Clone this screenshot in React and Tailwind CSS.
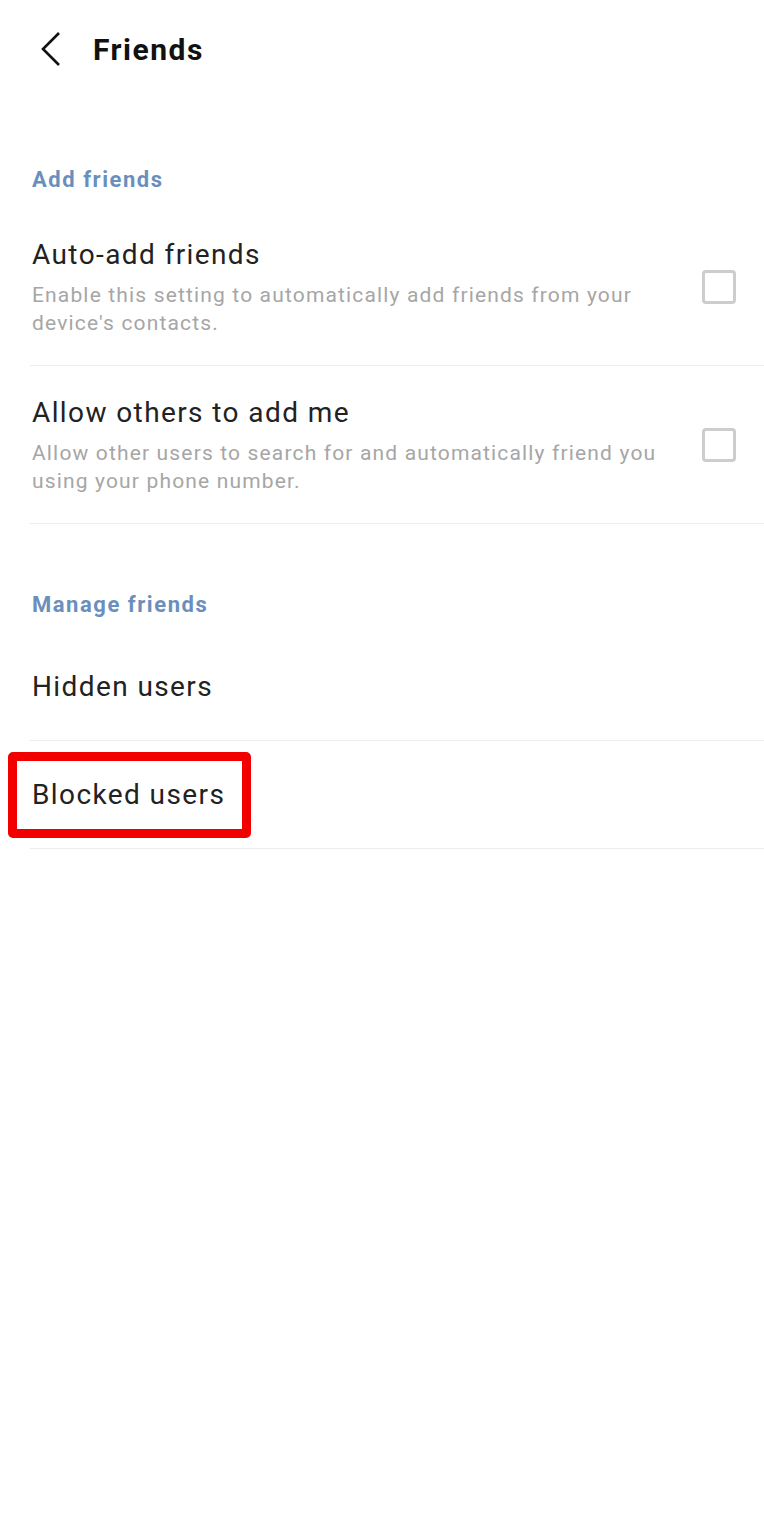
import React from "react";

const font = { fontFamily: "Roboto, 'Noto Sans', sans-serif" };

const Checkbox = () => (
  <div className="w-[34px] h-[34px] shrink-0 rounded-[4px] border-[3px] border-[#cdcdcd] bg-white" />
);

const ToggleRow = ({ title, desc }) => (
  <div className="flex items-center border-b border-[#ececec] pl-[2px] pr-[28px] pt-[29px] pb-[28px]">
    <div className="flex-1 pr-[36px]">
      <div className="text-[28px] leading-[36px] tracking-[0.05em] text-[#222222]">{title}</div>
      <div className="mt-[8px] text-[21px] leading-[28px] tracking-[0.055em] text-[#a6a6a6]">{desc}</div>
    </div>
    <Checkbox />
  </div>
);

const LinkRow = ({ label, highlight }) => (
  <div className="relative flex h-[108px] items-center border-b border-[#ececec] pl-[2px]">
    <span className="text-[28px] leading-[36px] tracking-[0.05em] text-[#222222]">{label}</span>
    {highlight && (
      <div className="absolute left-[-22px] top-[11px] h-[86px] w-[243px] rounded-[5px] border-[9px] border-[#f20000]" />
    )}
  </div>
);

export default function App() {
  return (
    <div className="min-h-[1539px] w-[764px] bg-white" style={font}>
      {/* Header */}
      <div className="flex h-[98px] items-center">
        <div className="flex w-[93px] justify-center">
          <svg width="24" height="36" viewBox="0 0 24 36" className="ml-[8px]">
            <polyline points="20,2 4,18 20,34" fill="none" stroke="#111" strokeWidth="2.6" />
          </svg>
        </div>
        <h1 className="text-[30px] font-bold tracking-[0.05em] text-[#111111]">Friends</h1>
      </div>

      <div className="pl-[30px]">
        <div className="pt-[68px] pb-[14px] pl-[2px] text-[22px] leading-[28px] font-bold tracking-[0.07em] text-[#6b8fbc]">
          Add friends
        </div>
        <ToggleRow
          title="Auto-add friends"
          desc="Enable this setting to automatically add friends from your device's contacts."
        />
        <ToggleRow
          title="Allow others to add me"
          desc="Allow other users to search for and automatically friend you using your phone number."
        />

        <div className="pt-[67px] pb-[14px] pl-[2px] text-[22px] leading-[28px] font-bold tracking-[0.07em] text-[#6b8fbc]">
          Manage friends
        </div>
        <LinkRow label="Hidden users" />
        <LinkRow label="Blocked users" highlight />
      </div>
    </div>
  );
}
